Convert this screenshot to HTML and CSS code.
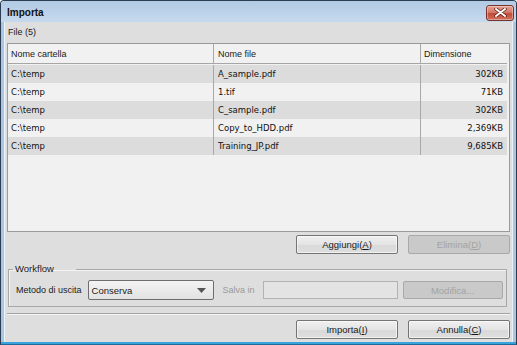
FILE: index.html
```html
<!DOCTYPE html>
<html>
<head>
<meta charset="utf-8">
<link rel="stylesheet" href="styles.css">
</head>
<body>
<div class="window">
  <div class="titlebar">
    <span class="title">Importa</span>
    <button class="close" aria-label="Chiudi">
      <svg width="13" height="9" viewBox="0 0 13 9"><path d="M2 1 L11 8 M11 1 L2 8" stroke="#5a1a12" stroke-width="3.4" stroke-linecap="round"/><path d="M2 1 L11 8 M11 1 L2 8" stroke="#fff" stroke-width="2" stroke-linecap="round"/></svg>
    </button>
  </div>
  <div class="client">
    <div class="files-label">File (5)</div>
    <div class="table">
      <div class="row head">
        <div class="cell">Nome cartella</div>
        <div class="cell">Nome file</div>
        <div class="cell">Dimensione</div>
      </div>
      <div class="row dark">
        <div class="cell mono">C:\temp</div>
        <div class="cell mono">A_sample.pdf</div>
        <div class="cell mono num">302KB</div>
      </div>
      <div class="row light">
        <div class="cell mono">C:\temp</div>
        <div class="cell mono">1.tif</div>
        <div class="cell mono num">71KB</div>
      </div>
      <div class="row dark">
        <div class="cell mono">C:\temp</div>
        <div class="cell mono">C_sample.pdf</div>
        <div class="cell mono num">302KB</div>
      </div>
      <div class="row light">
        <div class="cell mono">C:\temp</div>
        <div class="cell mono">Copy_to_HDD.pdf</div>
        <div class="cell mono num">2,369KB</div>
      </div>
      <div class="row dark">
        <div class="cell mono">C:\temp</div>
        <div class="cell mono">Training_JP.pdf</div>
        <div class="cell mono num">9,685KB</div>
      </div>
    </div>
    <div class="actions">
      <button class="btn">Aggiungi(<u>A</u>)</button>
      <button class="btn" disabled>Elimina(<u>D</u>)</button>
    </div>
    <fieldset class="workflow">
      <legend>Workflow</legend>
      <div class="wf-row">
        <span class="lbl">Metodo di uscita</span>
        <div class="select">
          <span>Conserva</span>
          <svg width="9" height="5" viewBox="0 0 9 5"><path d="M0 0 H9 L4.5 5 Z" fill="#555"/></svg>
        </div>
        <span class="lbl disabled">Salva in</span>
        <div class="input"></div>
        <button class="btn small" disabled>Modifica...</button>
      </div>
    </fieldset>
    <div class="separator"></div>
    <div class="actions bottom">
      <button class="btn">Importa(<u>I</u>)</button>
      <button class="btn">Annulla(<u>C</u>)</button>
    </div>
  </div>
</div>
</body>
</html>
```

FILE: styles.css
```css
* { box-sizing: border-box; }
html, body { margin: 0; padding: 0; }
body {
  width: 517px;
  height: 345px;
  overflow: hidden;
  font-family: "Liberation Sans", Arial, sans-serif;
  font-size: 9px;
  color: #1a1a1a;
  background: #ffffff;
}
.window {
  width: 517px;
  height: 345px;
  display: flex;
  flex-direction: column;
  border: 1px solid #2c3d52;
  border-bottom-color: #1d6a9c;
  border-radius: 4px 4px 0 0;
  background: linear-gradient(to top, #3aa2da 2px, #a9c6e5 2px);
}
.titlebar {
  height: 21px;
  flex: none;
  display: flex;
  align-items: center;
  justify-content: space-between;
  padding: 0 2px 0 6px;
  background: linear-gradient(#b2cae4, #c6d9ee);
  border-radius: 3px 3px 0 0;
}
.title {
  font-weight: bold;
  font-size: 10px;
  color: #111;
  margin-top: 1px;
}
.close {
  width: 28px;
  height: 16px;
  margin-top: 2px;
  padding: 0;
  border: 1px solid #7a3328;
  border-radius: 3px;
  background: linear-gradient(#e2a294, #d57a68 45%, #c04a36 55%, #d0735f);
  display: flex;
  align-items: center;
  justify-content: center;
  box-shadow: inset 0 0 0 1px rgba(255,255,255,0.35);
}
.close svg { display: block; }
.client {
  flex: 1;
  margin: 0 3px 2px 3px;
  border-left: 1px solid #eef3f8;
  border-right: 1px solid #eef3f8;
  background: #dedede;
  padding: 0 2px;
  display: flex;
  flex-direction: column;
}
.files-label {
  height: 21px;
  line-height: 20px;
  padding-left: 1px;
}
.table {
  height: 189px;
  border: 1px solid #9a9a9a;
  background: #f1f1f1;
  padding-right: 2px;
}
.row {
  display: grid;
  grid-template-columns: 206px 207px 86px;
  height: 18px;
}
.row.head {
  height: 20px;
  border-bottom: 1px solid #a6a6a6;
  margin-bottom: 1px;
}
.row.dark { background: #dcdcdc; }
.row.light { background: #f1f1f1; }
.cell {
  border-right: 1px solid #a8a8a8;
  padding: 0 3px;
  display: flex;
  align-items: center;
  white-space: nowrap;
  overflow: hidden;
}
.row.head .cell { padding-left: 3px; }
.row .cell:nth-child(2) { padding-left: 4px; }
.row .cell:last-child { border-right: none; }
.mono {
  font-family: "DejaVu Sans", Verdana, sans-serif;
  font-size: 8.5px;
  color: #111;
}
.num { justify-content: flex-end; padding-right: 4px; }
.actions {
  display: flex;
  justify-content: flex-end;
  gap: 10px;
  margin-top: 3px;
}
.btn {
  width: 102px;
  height: 19px;
  flex: none;
  padding: 0;
  font-family: "Liberation Sans", Arial, sans-serif;
  font-size: 9.5px;
  color: #1a1a1a;
  border: 1px solid #747474;
  border-radius: 2px;
  background: linear-gradient(#f0f0f0, #e4e4e4 50%, #d9d9d9 51%, #dedede);
  box-shadow: inset 0 0 0 1px rgba(255,255,255,0.6);
}
.btn u { text-decoration: underline; }
.btn:disabled {
  color: #a3a3a3;
  border-color: #a9a9a9;
  background: #c9c9c9;
  box-shadow: none;
}
.btn.small { width: 100px; height: 18px; }
.workflow {
  margin: 9px 3px 0 1px;
  padding: 5px 6px 6px 4px;
  border: 1px solid #a8a8a8;
  box-shadow: inset 1px 1px 0 #f4f4f4;
  min-width: 0;
}
.workflow legend {
  padding: 0 22px 0 2px;
  font-size: 9.5px;
  line-height: 12px;
  color: #1a1a1a;
}
.wf-row {
  display: flex;
  align-items: center;
  padding-left: 3px;
}
.lbl {
  margin-right: 6px;
  white-space: nowrap;
  flex: none;
}
.lbl.disabled { color: #9a9a9a; margin-left: 9px; margin-right: 8px; }
.select {
  width: 126px;
  height: 20px;
  flex: none;
  border: 1px solid #6e6e6e;
  border-radius: 2px;
  background: linear-gradient(#f4f4f4, #e2e2e2);
  display: flex;
  align-items: center;
  justify-content: space-between;
  padding: 0 7px 0 3px;
  font-size: 9.5px;
}
.select svg { display: block; }
.input {
  width: 135px;
  height: 18px;
  flex: none;
  border: 1px solid #b2b2b2;
  background: #e3e3e3;
  margin-right: 5px;
}
.separator {
  margin-top: 6px;
  height: 2px;
  flex: none;
  border-top: 1px solid #a2a2a2;
  border-bottom: 1px solid #f6f6f6;
}
.actions.bottom { margin-top: 5px; }
```
